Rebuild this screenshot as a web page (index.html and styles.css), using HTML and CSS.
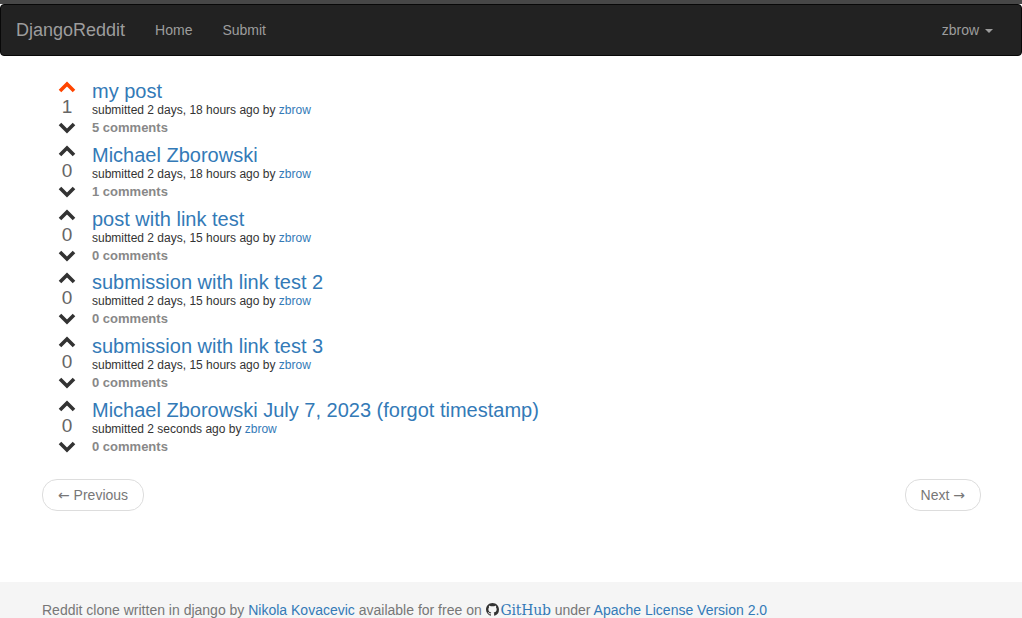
FILE: index.html
```html
<!DOCTYPE html>
<html>
<head>
<meta charset="utf-8">
<title>DjangoReddit</title>
<link rel="stylesheet" href="styles.css">
</head>
<body>
<div class="topstrip"></div>
<nav class="navbar">
  <div class="nav-left">
    <a class="brand" href="#">DjangoReddit</a>
    <a class="nav-link" href="#">Home</a>
    <a class="nav-link" href="#">Submit</a>
  </div>
  <a class="nav-link user" href="#">zbrow <span class="caret"></span></a>
</nav>

<main class="container">
  <div class="posts">
    <div class="post">
      <div class="vote">
        <svg class="arrow up active" viewBox="0 0 18 14" width="18" height="14"><polyline points="2,11 9,4 16,11"/></svg>
        <div class="score">1</div>
        <svg class="arrow down" viewBox="0 0 18 14" width="18" height="14"><polyline points="2,4 9,11 16,4"/></svg>
      </div>
      <div class="body">
        <a class="title" href="#">my post</a>
        <div class="sub">submitted 2 days, 18 hours ago by <a href="#">zbrow</a></div>
        <div class="comments">5 comments</div>
      </div>
    </div>
    <div class="post">
      <div class="vote">
        <svg class="arrow up" viewBox="0 0 18 14" width="18" height="14"><polyline points="2,11 9,4 16,11"/></svg>
        <div class="score">0</div>
        <svg class="arrow down" viewBox="0 0 18 14" width="18" height="14"><polyline points="2,4 9,11 16,4"/></svg>
      </div>
      <div class="body">
        <a class="title" href="#">Michael Zborowski</a>
        <div class="sub">submitted 2 days, 18 hours ago by <a href="#">zbrow</a></div>
        <div class="comments">1 comments</div>
      </div>
    </div>
    <div class="post">
      <div class="vote">
        <svg class="arrow up" viewBox="0 0 18 14" width="18" height="14"><polyline points="2,11 9,4 16,11"/></svg>
        <div class="score">0</div>
        <svg class="arrow down" viewBox="0 0 18 14" width="18" height="14"><polyline points="2,4 9,11 16,4"/></svg>
      </div>
      <div class="body">
        <a class="title" href="#">post with link test</a>
        <div class="sub">submitted 2 days, 15 hours ago by <a href="#">zbrow</a></div>
        <div class="comments">0 comments</div>
      </div>
    </div>
    <div class="post">
      <div class="vote">
        <svg class="arrow up" viewBox="0 0 18 14" width="18" height="14"><polyline points="2,11 9,4 16,11"/></svg>
        <div class="score">0</div>
        <svg class="arrow down" viewBox="0 0 18 14" width="18" height="14"><polyline points="2,4 9,11 16,4"/></svg>
      </div>
      <div class="body">
        <a class="title" href="#">submission with link test 2</a>
        <div class="sub">submitted 2 days, 15 hours ago by <a href="#">zbrow</a></div>
        <div class="comments">0 comments</div>
      </div>
    </div>
    <div class="post">
      <div class="vote">
        <svg class="arrow up" viewBox="0 0 18 14" width="18" height="14"><polyline points="2,11 9,4 16,11"/></svg>
        <div class="score">0</div>
        <svg class="arrow down" viewBox="0 0 18 14" width="18" height="14"><polyline points="2,4 9,11 16,4"/></svg>
      </div>
      <div class="body">
        <a class="title" href="#">submission with link test 3</a>
        <div class="sub">submitted 2 days, 15 hours ago by <a href="#">zbrow</a></div>
        <div class="comments">0 comments</div>
      </div>
    </div>
    <div class="post">
      <div class="vote">
        <svg class="arrow up" viewBox="0 0 18 14" width="18" height="14"><polyline points="2,11 9,4 16,11"/></svg>
        <div class="score">0</div>
        <svg class="arrow down" viewBox="0 0 18 14" width="18" height="14"><polyline points="2,4 9,11 16,4"/></svg>
      </div>
      <div class="body">
        <a class="title" href="#">Michael Zborowski July 7, 2023 (forgot timestamp)</a>
        <div class="sub">submitted 2 seconds ago by <a href="#">zbrow</a></div>
        <div class="comments">0 comments</div>
      </div>
    </div>
  </div>

  <ul class="pager">
    <li><a href="#"><span class="arr">&larr;</span> Previous</a></li>
    <li><a href="#">Next <span class="arr">&rarr;</span></a></li>
  </ul>
</main>

<footer class="footer">
  <div class="container">
    <p>Reddit clone written in django by <a href="#">Nikola Kovacevic</a> available for free on <a class="gh" href="#"><svg class="octo" viewBox="0 0 16 16" width="13" height="13"><path d="M8 0C3.58 0 0 3.58 0 8c0 3.54 2.29 6.53 5.47 7.59.4.07.55-.17.55-.38 0-.19-.01-.82-.01-1.49-2.01.37-2.53-.49-2.690-.94-.09-.23-.48-.94-.82-1.13-.28-.15-.68-.52-.01-.53.63-.01 1.08.58 1.23.82.72 1.21 1.87.87 2.33.66.07-.52.28-.87.51-1.07-1.78-.2-3.64-.89-3.64-3.95 0-.87.31-1.59.82-2.15-.08-.2-.36-1.02.08-2.12 0 0 .67-.21 2.2.82.64-.18 1.32-.27 2-.27.68 0 1.36.09 2 .27 1.53-1.04 2.2-.82 2.2-.82.44 1.1.16 1.92.08 2.12.51.56.82 1.27.82 2.15 0 3.07-1.87 3.75-3.65 3.95.29.25.54.73.54 1.48 0 1.07-.01 1.93-.01 2.2 0 .21.15.46.55.38A8.013 8.013 0 0016 8c0-4.42-3.58-8-8-8z"/></svg> <span class="ghtext">GitHub</span></a> under <a href="#">Apache License Version 2.0</a></p>
  </div>
</footer>
</body>
</html>
```

FILE: styles.css
```css
* { box-sizing: border-box; }

html, body {
  margin: 0;
  padding: 0;
}

body {
  font-family: "Liberation Sans", Arial, sans-serif;
  font-size: 14px;
  line-height: 1.42857;
  color: #333;
  background: #fff;
}

a {
  color: #337ab7;
  text-decoration: none;
}

.topstrip {
  height: 4px;
  background: #474747;
}

.navbar {
  display: flex;
  justify-content: space-between;
  align-items: center;
  height: 52px;
  background: #222;
  border: 1px solid #080808;
  border-radius: 4px;
}

.nav-left {
  display: flex;
  align-items: center;
}

.brand {
  padding: 15px;
  font-size: 18px;
  line-height: 20px;
  color: #9d9d9d;
}

.nav-link {
  padding: 15px;
  font-size: 14px;
  line-height: 20px;
  color: #9d9d9d;
}

.nav-link.user {
  padding-right: 28px;
}

.caret {
  display: inline-block;
  width: 0;
  height: 0;
  margin-left: 2px;
  vertical-align: middle;
  border-top: 4px solid #9d9d9d;
  border-left: 4px solid transparent;
  border-right: 4px solid transparent;
}

.container {
  width: 968px;
  margin: 0 auto;
  padding: 0 14px 0 15px;
}

.posts {
  padding-top: 24px;
}

.post {
  display: flex;
  margin-bottom: 7.8px;
}

.vote {
  width: 50px;
  flex: none;
  display: flex;
  flex-direction: column;
  align-items: center;
}

.arrow {
  display: block;
}

.arrow polyline {
  fill: none;
  stroke: #333;
  stroke-width: 3.6;
  stroke-linecap: butt;
  stroke-linejoin: miter;
}

.arrow.active polyline {
  stroke: #ff4500;
}

.score {
  font-size: 19px;
  line-height: 26px;
  color: #666;
}

.body {
  display: flex;
  flex-direction: column;
  align-items: flex-start;
}

.title {
  font-size: 20px;
  line-height: 22px;
}

.sub {
  font-size: 12px;
  line-height: 16px;
}

.comments {
  padding-top: 1px;
  font-size: 13px;
  line-height: 17px;
  font-weight: bold;
  color: #888;
}

.pager {
  display: flex;
  justify-content: space-between;
  list-style: none;
  margin: 24px 0 0;
  padding: 0;
}

.pager a {
  display: inline-block;
  padding: 5px 15px;
  line-height: 20px;
  color: #777;
  background: #fff;
  border: 1px solid #ddd;
  border-radius: 15px;
}

.pager .arr {
  font-family: "DejaVu Sans", sans-serif;
  font-size: 14px;
}

.footer {
  margin-top: 71px;
  background: #f5f5f5;
  padding-top: 18px;
  height: 60px;
}

.footer p {
  margin: 0;
  color: #777;
  line-height: 20px;
}

.octo {
  fill: #333;
  vertical-align: -1px;
  margin-left: 0;
  margin-right: -2px;
}

.gh .ghtext {
  font-family: "DejaVu Serif", serif;
  font-size: 14px;
  letter-spacing: -0.2px;
}
```
